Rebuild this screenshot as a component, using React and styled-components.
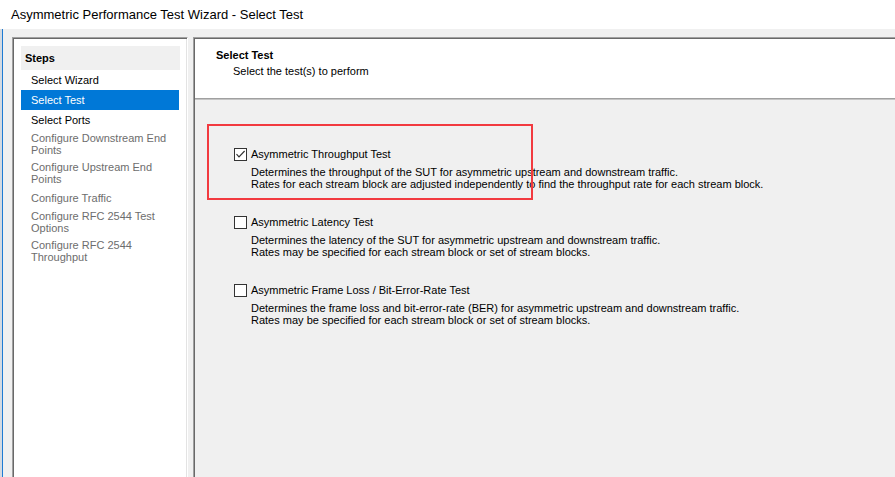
import React from "react";
import styled, { createGlobalStyle } from "styled-components";

const GlobalStyle = createGlobalStyle`
  html, body {
    margin: 0;
    padding: 0;
  }
  body {
    font-family: "Liberation Sans", Arial, sans-serif;
    font-size: 11px;
    color: #000;
    background: #f0f0f0;
  }
`;

const steps = [
  { lines: ["Select Wizard"] },
  { lines: ["Select Test"], selected: true },
  { lines: ["Select Ports"] },
  { lines: ["Configure Downstream End", "Points"], disabled: true },
  { lines: ["Configure Upstream End", "Points"], disabled: true },
  { lines: ["Configure Traffic"], disabled: true },
  { lines: ["Configure RFC 2544 Test", "Options"], disabled: true },
  { lines: ["Configure RFC 2544", "Throughput"], disabled: true },
];

const tests = [
  {
    name: "Asymmetric Throughput Test",
    checked: true,
    desc: [
      "Determines the throughput of the SUT for asymmetric upstream and downstream traffic.",
      "Rates for each stream block are adjusted independently to find the throughput rate for each stream block.",
    ],
  },
  {
    name: "Asymmetric Latency Test",
    desc: [
      "Determines the latency of the SUT for asymmetric upstream and downstream traffic.",
      "Rates may be specified for each stream block or set of stream blocks.",
    ],
  },
  {
    name: "Asymmetric Frame Loss / Bit-Error-Rate Test",
    desc: [
      "Determines the frame loss and bit-error-rate (BER) for asymmetric upstream and downstream traffic.",
      "Rates may be specified for each stream block or set of stream blocks.",
    ],
  },
];

export default function App() {
  return (
    <>
      <GlobalStyle />
      <Window>
        <TitleBar>Asymmetric Performance Test Wizard - Select Test</TitleBar>
        <Body>
          <StepsPanel>
            <StepsHeader>Steps</StepsHeader>
            {steps.map((s) => (
              <StepItem key={s.lines[0]} selected={s.selected} disabled={s.disabled} multi={s.lines.length > 1}>
                {s.lines.map((l, i) => (
                  <div key={i}>{l}</div>
                ))}
              </StepItem>
            ))}
          </StepsPanel>

          <PagePanel>
            <PageHeader>
              <PageTitle>Select Test</PageTitle>
              <PageSubtitle>Select the test(s) to perform</PageSubtitle>
            </PageHeader>
            <PageContent>
              {tests.map((t) => (
                <TestOption key={t.name}>
                  <OptionRow>
                    <CheckBox>
                      {t.checked && (
                        <svg width="11" height="11" viewBox="0 0 11 11">
                          <polyline points="1.5,5.2 4,7.8 9.6,2" fill="none" stroke="#333" strokeWidth="1.2" />
                        </svg>
                      )}
                    </CheckBox>
                    <OptionLabel>{t.name}</OptionLabel>
                  </OptionRow>
                  <OptionDesc>
                    {t.desc.map((d) => (
                      <div key={d}>{d}</div>
                    ))}
                  </OptionDesc>
                </TestOption>
              ))}
              <Highlight />
            </PageContent>
          </PagePanel>
        </Body>
      </Window>
    </>
  );
}

const Window = styled.div`
  width: 895px;
  height: 477px;
  overflow: hidden;
  display: flex;
  flex-direction: column;
  background: #f0f0f0;
`;

const TitleBar = styled.div`
  flex: none;
  height: 29px;
  background: #fff;
  display: flex;
  align-items: center;
  padding-left: 11px;
  font-size: 13px;
  color: #000;
`;

const Body = styled.div`
  flex: 1;
  display: flex;
  gap: 5px;
  padding: 8px 0 0 12px;
  margin-bottom: -20px;
  margin-right: -20px;
  background: linear-gradient(to right, #d3dae2 0 2px, #1e7bd3 2px 3px, #f0f0f0 3px);
`;

const Sunken = styled.div`
  box-sizing: border-box;
  border: 1px solid;
  border-color: #a0a0a0 #fff #fff #a0a0a0;
  box-shadow: inset 1px 1px 0 #696969, inset -1px -1px 0 #e3e3e3;
  padding: 1px;
`;

const StepsPanel = styled(Sunken)`
  flex: none;
  width: 176px;
  background: #fff;
  padding: 8px 7px 0 8px;
`;

const StepsHeader = styled.div`
  height: 24px;
  width: 159px;
  display: flex;
  align-items: center;
  padding-left: 4px;
  box-sizing: border-box;
  background: #f0f0f0;
  font-weight: bold;
`;

const StepItem = styled.div`
  width: 158px;
  box-sizing: border-box;
  padding: ${({ multi }) => (multi ? "2px 10px 3px" : "4px 10px")};
  line-height: 12px;
  color: ${({ selected, disabled }) => (selected ? "#fff" : disabled ? "#6d6d6d" : "#000")};
  background: ${({ selected }) => (selected ? "#0078d7" : "transparent")};
`;

const PagePanel = styled(Sunken)`
  flex: 1;
  display: flex;
  flex-direction: column;
  padding: 1px 0 0 1px;
`;

const PageHeader = styled.div`
  flex: none;
  height: 60px;
  box-sizing: border-box;
  background: #fff;
  padding-top: 9px;
  border-bottom: 1px solid #a0a0a0;
  box-shadow: 0 1px 0 #c4c4c4;
`;

const PageTitle = styled.div`
  padding-left: 21px;
  line-height: 14px;
  font-weight: bold;
`;

const PageSubtitle = styled.div`
  margin-top: 2px;
  padding-left: 38px;
  line-height: 14px;
`;

const PageContent = styled.div`
  position: relative;
  flex: 1;
  padding: 49px 0 0 39px;
`;

const TestOption = styled.div`
  margin-bottom: 26px;
`;

const OptionRow = styled.div`
  display: flex;
  align-items: center;
  gap: 4px;
  height: 13px;
`;

const CheckBox = styled.div`
  width: 13px;
  height: 13px;
  box-sizing: border-box;
  border: 1px solid #333;
  background: #fff;
  display: flex;
  align-items: center;
  justify-content: center;
`;

const OptionLabel = styled.div`
  line-height: 13px;
`;

const OptionDesc = styled.div`
  margin: 5px 0 0 17px;
  line-height: 12px;
`;

const Highlight = styled.div`
  position: absolute;
  left: 12px;
  top: 25px;
  width: 326px;
  height: 76px;
  box-sizing: border-box;
  border: 2px solid #f23a40;
  pointer-events: none;
`;
